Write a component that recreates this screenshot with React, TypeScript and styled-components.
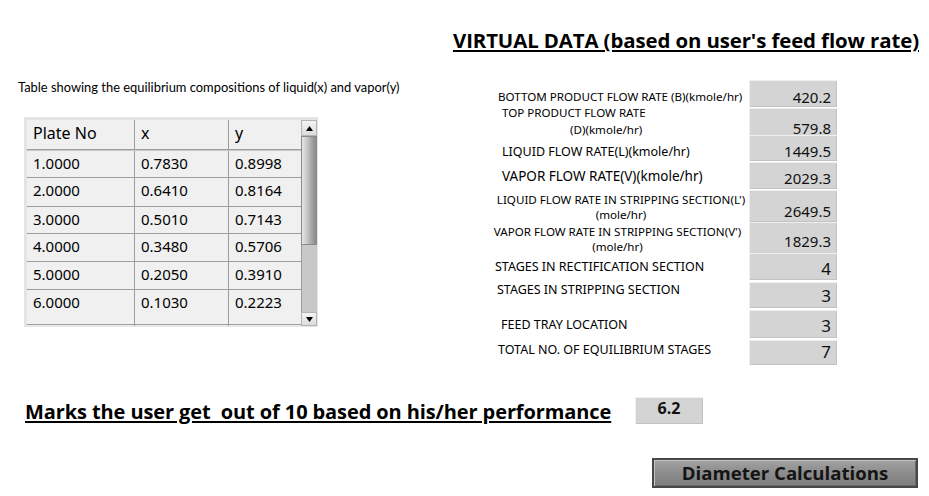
import React from 'react';
import styled, { createGlobalStyle } from 'styled-components';

const Global = createGlobalStyle`
  html, body { margin: 0; padding: 0; background: #ffffff; }
  body { font-family: "Noto Sans", "Open Sans", sans-serif; color: #000; }
`;

const Page = styled.div`
  width: 929px;
  height: 496px;
  overflow: hidden;
  background: #ffffff;
  display: flex;
  flex-direction: column;
`;

const TitleBar = styled.div`
  display: flex;
  justify-content: flex-end;
  padding: 28px 10px 0 0;
`;

const Title = styled.h1`
  margin: 0;
  font: 700 20.4px/24px "Open Sans", sans-serif;
  letter-spacing: -0.1px;
  text-decoration: underline;
  text-decoration-thickness: 2px;
  text-underline-offset: 2px;
  white-space: nowrap;
`;

const Main = styled.div`
  display: flex;
  margin-top: 26px;
`;

const LeftCol = styled.div`
  width: 493px;
  box-sizing: border-box;
  padding-left: 18px;
  display: flex;
  flex-direction: column;
`;

const Caption = styled.div`
  margin-top: 2px;
  font: 400 12.9px/15px Lato, sans-serif;
  white-space: nowrap;
`;

const TableFrame = styled.div`
  margin: 22px 0 0 6px;
  width: 294px;
  height: 210px;
  box-sizing: border-box;
  border-style: solid;
  border-color: #e4e4e4;
  border-width: 3px 1px 1px 3px;
  display: flex;
  overflow: hidden;
`;

const Cells = styled.div`
  width: 274px;
  background: #f0f0f0;
  display: flex;
  flex-direction: column;
  overflow: hidden;
`;

const HeadRow = styled.div`
  display: grid;
  grid-template-columns: 108px 94px 72px;
  height: 31px;
  flex: none;
  box-sizing: border-box;
  border-bottom: 1px solid #c9c9c9;
  box-shadow: inset 0 -1px 0 #9d9d9d;
`;

const HeadCell = styled.div<{ $last?: boolean }>`
  padding: 4px 0 0 6px;
  font: 400 16px/19px "Noto Sans", sans-serif;
  border-right: ${(p) => (p.$last ? 'none' : '1px solid #9d9d9d')};
`;

const DataRow = styled.div<{ $h: number }>`
  display: grid;
  grid-template-columns: 108px 94px 72px;
  height: ${(p) => p.$h}px;
  flex: none;
  box-sizing: border-box;
  border-bottom: 1px solid #9d9d9d;
`;

const DataCell = styled.div<{ $last?: boolean }>`
  padding: 3px 0 0 6px;
  font: 400 15px/18px "Noto Sans", sans-serif;
  border-right: ${(p) => (p.$last ? 'none' : '1px solid #9d9d9d')};
`;

const ScrollBar = styled.div`
  width: 16px;
  display: flex;
  flex-direction: column;
  background: #c6c6c6;
`;

const ScrollBtn = styled.div<{ $h: number }>`
  height: ${(p) => p.$h}px;
  flex: none;
  box-sizing: border-box;
  background: linear-gradient(#f4f4f4, #dcdcdc);
  border: 1px solid #b4b4b4;
  display: flex;
  align-items: center;
  justify-content: center;
`;

const Thumb = styled.div`
  height: 109px;
  flex: none;
  box-sizing: border-box;
  border: 1px solid #8a8a8a;
  background: linear-gradient(90deg, #e6e6e6 0%, #c8c8c8 35%, #a4a4a4 70%, #8a8a8a 100%);
`;

const Track = styled.div`
  flex: 1;
  border-left: 1px solid #9c9c9c;
  background: #c8c8c8;
`;

const RightCol = styled.div`
  width: 345px;
  display: flex;
  flex-direction: column;
`;

const Row = styled.div<{ $h: number; $mt: number }>`
  display: grid;
  grid-template-columns: 256px 88px;
  height: ${(p) => p.$h}px;
  margin-top: ${(p) => p.$mt}px;
`;

const Label = styled.div<{ $off: number; $pl: number; $pr?: number; $fs?: number; $lh?: number; $center?: boolean }>`
  align-self: start;
  margin-top: ${(p) => p.$off}px;
  padding-left: ${(p) => p.$pl}px;
  padding-right: ${(p) => p.$pr ?? 0}px;
  font-family: "Noto Sans", sans-serif;
  font-size: ${(p) => p.$fs ?? 12.5}px;
  line-height: ${(p) => p.$lh ?? 15}px;
  text-align: ${(p) => (p.$center ? 'center' : 'left')};
  white-space: nowrap;
`;

const Line = styled.div<{ $indent?: number }>`
  padding-left: ${(p) => p.$indent ?? 0}px;
`;

const ValueBox = styled.div<{ $pb: number; $fs?: number }>`
  background: #d4d4d4;
  box-shadow: inset 1px 1px 0 #efefef, inset -1px -1px 0 #c2c2c2;
  display: flex;
  align-items: flex-end;
  justify-content: flex-end;
  padding: 0 6px ${(p) => p.$pb}px 0;
  font-family: "Noto Sans", sans-serif;
  font-size: ${(p) => p.$fs ?? 15}px;
  line-height: ${(p) => ((p.$fs ?? 15) > 15 ? 20 : 18)}px;
  color: #111;
`;

const MarksRow = styled.div`
  display: grid;
  grid-template-columns: 610px 68px;
  padding-left: 25px;
  margin-top: 32px;
  align-items: start;
`;

const MarksText = styled.div`
  margin-top: 3px;
  font: 700 20px/24px "Open Sans", sans-serif;
  letter-spacing: -0.1px;
  text-decoration: underline;
  text-decoration-thickness: 2px;
  text-underline-offset: 2px;
  white-space: pre;
`;

const ScoreBox = styled.div`
  height: 27px;
  background: #d4d4d4;
  box-shadow: inset 1px 1px 0 #efefef, inset -1px -1px 0 #c2c2c2;
  text-align: center;
  font: 700 16px/22px "Open Sans", sans-serif;
  color: #111;
`;

const ButtonRow = styled.div`
  display: flex;
  justify-content: flex-end;
  padding-right: 11px;
  margin-top: 34px;
`;

const Button = styled.button`
  width: 266px;
  height: 30px;
  box-sizing: border-box;
  border: 2px solid #474747;
  background: linear-gradient(#a2a2a2, #8c8c8c 50%, #7e7e7e);
  box-shadow: inset 1px 1px 0 #c4c4c4, inset -1px -1px 0 #6a6a6a;
  font: 700 18.6px/24px "Open Sans", sans-serif;
  color: #141414;
  padding: 0;
  cursor: pointer;
`;

const tableData = [
  { h: 27, v: ['1.0000', '0.7830', '0.8998'] },
  { h: 29, v: ['2.0000', '0.6410', '0.8164'] },
  { h: 27, v: ['3.0000', '0.5010', '0.7143'] },
  { h: 28, v: ['4.0000', '0.3480', '0.5706'] },
  { h: 28, v: ['5.0000', '0.2050', '0.3910'] },
  { h: 35, v: ['6.0000', '0.1030', '0.2223'] },
  { h: 28, v: ['', '', ''] },
];

type RowSpec = {
  h: number;
  mt: number;
  lines: { text: string; indent?: number }[];
  off: number;
  pl: number;
  pr?: number;
  fs?: number;
  lh?: number;
  center?: boolean;
  value: string;
  pb: number;
  vfs?: number;
};

const rows: RowSpec[] = [
  { h: 27, mt: 2, lines: [{ text: 'BOTTOM PRODUCT FLOW RATE (B)(kmole/hr)' }], off: 9, pl: 5, fs: 11.6, value: '420.2', pb: 1.5 },
  {
    h: 26, mt: 1,
    lines: [{ text: 'TOP PRODUCT FLOW RATE' }, { text: '(D)(kmole/hr)', indent: 68 }],
    off: -4, pl: 9, fs: 11.6, lh: 17, value: '579.8', pb: 1,
  },
  { h: 26, mt: 1, lines: [{ text: 'LIQUID FLOW RATE(L)(kmole/hr)' }], off: 9, pl: 9, value: '1449.5', pb: 1 },
  { h: 27, mt: 1, lines: [{ text: 'VAPOR FLOW RATE(V)(kmole/hr)' }], off: 6, pl: 9, fs: 13.5, lh: 17, value: '2029.3', pb: 2.5 },
  {
    h: 25, mt: 1,
    lines: [{ text: "LIQUID FLOW RATE IN STRIPPING SECTION(L')" }, { text: '(mole/hr)' }],
    off: 2, pl: 0, fs: 11.6, center: true, value: '2649.5', pb: 2,
  },
  {
    h: 30, mt: 7,
    lines: [{ text: "VAPOR FLOW RATE IN STRIPPING SECTION(V')" }, { text: '(mole/hr)' }],
    off: 2, pl: 0, pr: 7, fs: 11.6, center: true, value: '1829.3', pb: 4,
  },
  { h: 27, mt: 1, lines: [{ text: 'STAGES IN RECTIFICATION SECTION' }], off: 6, pl: 2, value: '4', pb: 1.5, vfs: 17 },
  { h: 26, mt: 2, lines: [{ text: 'STAGES IN STRIPPING SECTION' }], off: 0, pl: 4, value: '3', pb: 2.5, vfs: 17 },
  { h: 28, mt: 2, lines: [{ text: 'FEED TRAY LOCATION' }], off: 7, pl: 8, value: '3', pb: 2.5, vfs: 17 },
  { h: 25, mt: 2, lines: [{ text: 'TOTAL NO. OF EQUILIBRIUM STAGES' }], off: 2, pl: 5, value: '7', pb: 3.5, vfs: 17 },
];

const Arrow = ({ up }: { up: boolean }) => (
  <svg width="7" height="5" viewBox="0 0 7 5">
    <polygon points={up ? '3.5,0 7,5 0,5' : '0,0 7,0 3.5,5'} fill="#000" />
  </svg>
);

export default function App() {
  return (
    <Page>
      <Global />
      <TitleBar>
        <Title>VIRTUAL DATA (based on user's feed flow rate)</Title>
      </TitleBar>
      <Main>
        <LeftCol>
          <Caption>Table showing the equilibrium compositions of liquid(x) and vapor(y)</Caption>
          <TableFrame>
            <Cells>
              <HeadRow>
                <HeadCell>Plate No</HeadCell>
                <HeadCell>x</HeadCell>
                <HeadCell $last>y</HeadCell>
              </HeadRow>
              {tableData.map((r, i) => (
                <DataRow key={i} $h={r.h}>
                  <DataCell>{r.v[0]}</DataCell>
                  <DataCell>{r.v[1]}</DataCell>
                  <DataCell $last>{r.v[2]}</DataCell>
                </DataRow>
              ))}
            </Cells>
            <ScrollBar>
              <ScrollBtn $h={16}><Arrow up /></ScrollBtn>
              <Thumb />
              <Track />
              <ScrollBtn $h={14}><Arrow up={false} /></ScrollBtn>
            </ScrollBar>
          </TableFrame>
        </LeftCol>
        <RightCol>
          {rows.map((r, i) => (
            <Row key={i} $h={r.h} $mt={r.mt}>
              <Label $off={r.off} $pl={r.pl} $pr={r.pr} $fs={r.fs} $lh={r.lh} $center={r.center}>
                {r.lines.map((l, j) => (
                  <Line key={j} $indent={l.indent}>{l.text}</Line>
                ))}
              </Label>
              <ValueBox $pb={r.pb} $fs={r.vfs}>{r.value}</ValueBox>
            </Row>
          ))}
        </RightCol>
      </Main>
      <MarksRow>
        <MarksText>Marks the user get  out of 10 based on his/her performance</MarksText>
        <ScoreBox>6.2</ScoreBox>
      </MarksRow>
      <ButtonRow>
        <Button>Diameter Calculations</Button>
      </ButtonRow>
    </Page>
  );
}
